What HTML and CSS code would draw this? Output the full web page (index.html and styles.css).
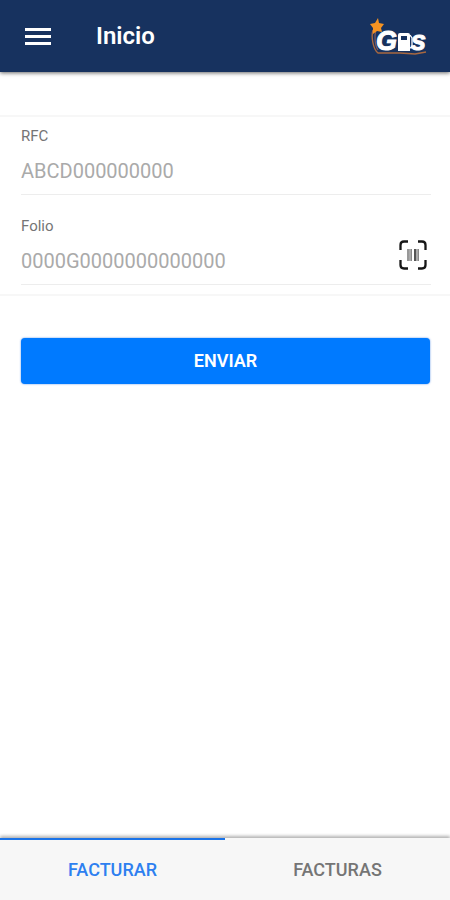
FILE: index.html
```html
<!DOCTYPE html>
<html lang="es">
<head>
<meta charset="utf-8">
<meta name="viewport" content="width=device-width, initial-scale=1">
<title>Inicio</title>
<link rel="stylesheet" href="styles.css">
</head>
<body>
<header class="toolbar">
  <button class="menu" type="button" aria-label="Menú">
    <svg width="26" height="18" viewBox="0 0 26 18" fill="#fff"><path d="M0 1h26v3H0zM0 8h26v3H0zM0 15h26v3H0z"/></svg>
  </button>
  <h1 class="title">Inicio</h1>
  <svg class="logo" width="60" height="48" viewBox="0 -3 60 48" role="img" aria-label="Gas">
    <path d="M3 15C1 22 3 34 8 38H30L45 39L56 37" fill="none" stroke="#a86840" stroke-width="1.400"/>
    <path d="M6 14C4 22 5 31 8 35" fill="none" stroke="#7d5a62" stroke-width="1.200"/>
    <path d="M8 3l1 5 5 1-3 4 1 4-5-1-4 3V13L0 9l5-1z" fill="#f59322"/>
    <g class="logo-text"><text x="6" y="35">G</text><text x="41" y="35">s</text></g>
    <path d="M30 18h8q2 0 2 2v16H28V20q0-2 2-2z" fill="#fff"/>
    <path d="M31 21h6v4h-6z" fill="#17325f"/>
    <path d="M40 20l2 3v9q-1 2-2 0" fill="none" stroke="#fff" stroke-width="1.300"/>
  </svg>
</header>
<main class="content">
  <form class="form">
    <div class="fields">
      <div class="field">
        <label for="rfc">RFC</label>
        <input id="rfc" type="text" placeholder="ABCD000000000">
      </div>
      <div class="field">
        <label for="folio">Folio</label>
        <div class="entry">
          <input id="folio" type="text" placeholder="0000G0000000000000">
          <button class="scan" type="button" aria-label="Escanear código">
            <svg width="28" height="30" viewBox="0 0 28 30" fill="none">
              <path d="M1.500 10V5q0-3.500 3.500-3.500h4M19 1.500h4q3.500 0 3.500 3.500v5M26.500 20v5q0 3.500-3.500 3.500h-4M9 28.500H5q-3.500 0-3.500-3.500v-5" stroke="#161616" stroke-width="2.300"/>
              <path d="M8 9h5v12H8zM15 9h5v12h-5z" fill="#aaa"/>
              <path d="M9 9v12M12.500 9v12M19.500 9v12" stroke="#888"/>
              <path d="M16 9v12" stroke="#555" stroke-width="2"/>
            </svg>
          </button>
        </div>
      </div>
    </div>
    <button class="submit" type="submit">ENVIAR</button>
  </form>
</main>
<nav class="tabs">
  <a class="tab active" href="#facturar" aria-current="page">FACTURAR</a>
  <a class="tab" href="#facturas">FACTURAS</a>
</nav>
</body>
</html>
```
FILE: styles.css
```css
* { box-sizing: border-box; }

body {
  margin: 0;
  min-height: 100vh;
  display: flex;
  flex-direction: column;
  background: #fff;
  font-family: Roboto, sans-serif;
}

button {
  border: 0;
  padding: 0;
  background: none;
  font-family: inherit;
}

svg { display: block; }

.toolbar {
  display: flex;
  align-items: center;
  height: 72px;
  padding: 0 20px 0 25px;
  background: #17325f;
  box-shadow: 0 1px 4px rgba(0, 0, 0, .6);
}

.title {
  flex: 1;
  margin: 0 0 0 45px;
  color: #fff;
  font-size: 24px;
  line-height: 32px;
  font-weight: 600;
}

.logo-text {
  fill: #fff;
  stroke: #fff;
  stroke-width: 1px;
  font: italic bold 27px "Liberation Sans", sans-serif;
}

.content { flex: 1; }

.fields {
  margin-top: 43px;
  padding: 0 19px 9px 21px;
  border-top: 2px solid #f7f7f7;
  border-bottom: 2px solid #f7f7f7;
}

.field {
  padding-top: 9px;
  height: 78px;
  border-bottom: 1px solid #ededed;
}

.field + .field {
  height: 90px;
  padding-top: 21px;
}

.field label {
  display: block;
  color: #757575;
  font-size: 15px;
  line-height: 20px;
}

.field input {
  display: block;
  width: 100%;
  min-width: 0;
  height: 48px;
  padding: 2px 0 0;
  border: 0;
  outline: 0;
  background: none;
  color: #333;
  font: 20px Roboto, sans-serif;
}

.field input::placeholder { color: #aaa; opacity: 1; }

.entry {
  display: flex;
  align-items: flex-start;
}

.scan { margin: 4px 4px 0 8px; }

.submit {
  display: block;
  width: calc(100% - 41px);
  height: 46px;
  margin: 42px 20px 0 21px;
  border-radius: 4px;
  background: #007aff;
  box-shadow: 0 0 2px rgba(0, 90, 220, .7);
  color: #fff;
  font-size: 18px;
  line-height: 46px;
  font-weight: 600;
}

.tabs {
  display: flex;
  height: 62px;
  background: #f7f7f7;
  box-shadow: 0 -2px 3px rgba(0, 0, 0, .3);
}

.tab {
  flex: 1;
  padding-top: 3px;
  border-top: 2px solid transparent;
  color: #757575;
  font-size: 18px;
  line-height: 54px;
  font-weight: 500;
  text-align: center;
  text-decoration: none;
}

.tab.active {
  border-top-color: #1a73e8;
  color: #2d7ff0;
}
```
